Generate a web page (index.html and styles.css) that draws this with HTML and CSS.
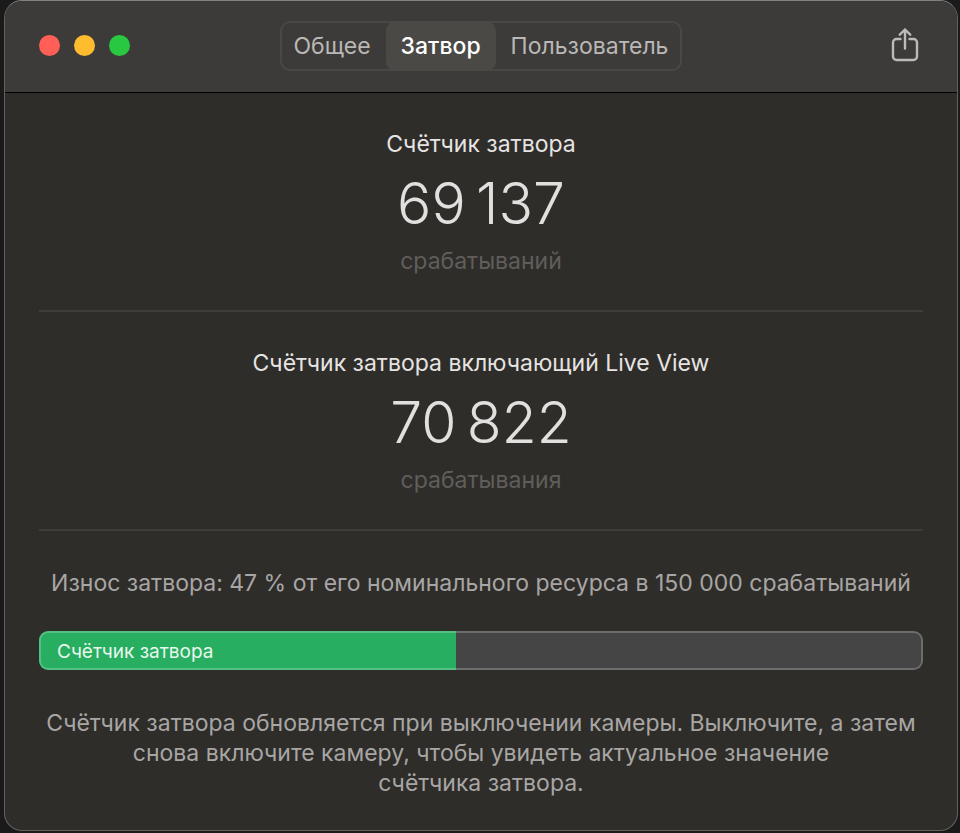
FILE: index.html
```
<!DOCTYPE html>
<html lang="ru">

<head>
    <meta charset="utf-8">
    <meta name="viewport" content="width=device-width, initial-scale=1">
    <title>Затвор</title>
    <link rel="stylesheet" href="styles.css">
</head>

<body>
    <div class="window">
        <header class="toolbar">
            <div class="lights">
                <button type="button" class="light close" aria-label="Закрыть"></button>
                <button type="button" class="light minimize" aria-label="Свернуть"></button>
                <button type="button" class="light zoom" aria-label="Развернуть"></button>
            </div>
            <nav class="tabs">
                <button type="button" class="tab">Общее</button>
                <button type="button" class="tab active" aria-current="page">Затвор</button>
                <button type="button" class="tab">Пользователь</button>
            </nav>
            <button type="button" class="share" aria-label="Поделиться">
                <svg width="28" height="36" viewBox="0 0 28 36" fill="none" stroke="currentColor" stroke-width="2.4" stroke-linecap="round" stroke-linejoin="round">
                    <path d="M9.5 11H5.5A3.5 3.5 0 0 0 2 14.5v14A3.5 3.5 0 0 0 5.5 32h17a3.5 3.5 0 0 0 3.5-3.5v-14A3.5 3.5 0 0 0 22.5 11h-4" />
                    <path d="M14 20.5V1.5M8.8 6.7L14 1.5l5.2 5.2" />
                </svg>
            </button>
        </header>

        <main class="content">
            <section class="counter">
                <h2>Счётчик затвора</h2>
                <p class="value">69&#8201;137</p>
                <p class="unit">срабатываний</p>
            </section>

            <section class="counter">
                <h2>Счётчик затвора включающий Live View</h2>
                <p class="value">70&#8201;822</p>
                <p class="unit">срабатывания</p>
            </section>

            <section class="wear">
                <p>Износ затвора: 47 % от его номинального ресурса в 150 000 срабатываний</p>
                <div class="bar" role="progressbar" aria-label="Счётчик затвора" aria-valuemin="0" aria-valuemax="100" aria-valuenow="47">
                    <div class="fill" style="width: 47.2%">Счётчик затвора</div>
                </div>
                <p>Счётчик затвора обновляется при выключении камеры. Выключите, а затем<br>
                    снова включите камеру, чтобы увидеть актуальное значение<br>
                    счётчика затвора.</p>
            </section>
        </main>
    </div>
</body>

</html>
```
FILE: styles.css
```
* {
    box-sizing: border-box;
}

body {
    margin: 0;
    padding: 0 2px 2px 4px;
    min-height: 100vh;
    display: flex;
    background: #1b1a1b;
    color: #a8a6a4;
    font-family: Inter, "Liberation Sans", sans-serif;
    font-size: 23px;
    line-height: 30px;
}

button {
    margin: 0;
    padding: 0;
    border: none;
    background: none;
    color: inherit;
    font: inherit;
    cursor: pointer;
}

h2, p {
    margin: 0;
    font-size: 23px;
    font-weight: 400;
}

.window {
    flex: 1;
    min-width: 0;
    background: #2f2d2a;
    border: 1px solid #62615e;
    border-top-color: #82807e;
    border-radius: 18px;
    overflow: hidden;
}

.toolbar {
    display: grid;
    grid-template-columns: 1fr auto 1fr;
    align-items: center;
    height: 92px;
    padding: 0 34px 2px;
    background: #3d3b39;
    border-bottom: 1px solid #000;
}

.lights {
    display: flex;
    gap: 14px;
}

.light {
    width: 21px;
    height: 21px;
    border-radius: 50%;
}

.close {
    background: #ff5f57;
}

.minimize {
    background: #febc2e;
}

.zoom {
    background: #28c840;
}

.tabs {
    display: flex;
    height: 50px;
    border: 2px solid #4a4846;
    border-radius: 10px;
}

.tab {
    margin: -2px 0;
    padding: 0 15px;
    border-radius: 10px;
    color: #bab8b6;
}

.tab:first-child {
    padding-left: 12px;
}

.tab:last-child {
    padding-right: 12px;
}

.tab.active {
    background: #4b4946;
    color: #fff;
    font-weight: 500;
}

.share {
    justify-self: end;
    height: 36px;
    padding: 0 4px;
    color: #bdbbb9;
}

.share svg {
    display: block;
}

.content {
    padding: 0 34px;
    text-align: center;
}

.counter {
    padding: 36px 0 34px;
    border-bottom: 2px solid #3f3d3a;
}

.counter h2 {
    color: #e6e4e2;
}

.counter .value {
    margin: 10px 0 9px;
    color: #e2e0de;
    font-size: 57px;
    font-weight: 300;
    line-height: 70px;
    margin-bottom: 7px;
}

.counter .unit {
    color: #605e5b;
}

.wear {
    padding: 37px 0 30px;
}

.bar {
    display: flex;
    height: 39px;
    margin: 33px 0 38px;
    background: #464546;
    border-radius: 9px;
    overflow: hidden;
    position: relative;
}

.bar::after {
    content: "";
    position: absolute;
    inset: 0;
    border: 2px solid rgba(255, 255, 255, .22);
    border-radius: 9px;
}

.fill {
    padding-left: 18px;
    background: #27ae60;
    color: #e9f7ee;
    font-size: 19px;
    line-height: 42px;
    text-align: left;
    white-space: nowrap;
}
```
